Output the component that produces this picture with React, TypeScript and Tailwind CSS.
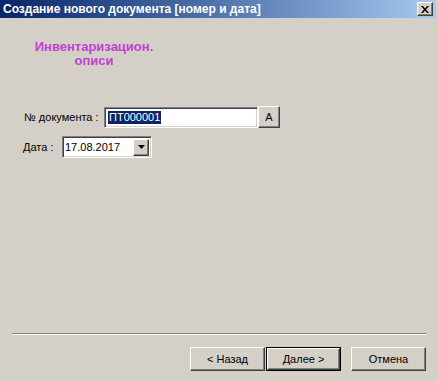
import React from "react";

const raised =
  "border border-t-white border-l-white border-r-[#404040] border-b-[#404040] shadow-[inset_-1px_-1px_0_#808080]";
const sunken =
  "border border-t-[#808080] border-l-[#808080] border-r-white border-b-white shadow-[inset_1px_1px_0_#404040,inset_-1px_-1px_0_#d4d0c8]";

function Btn({ label, def }: { label: string; def?: boolean }) {
  if (def) {
    return (
      <div className="w-[75px] h-[24px] border border-black">
        <div className={`w-full h-full bg-[#d4d0c8] flex items-center justify-center ${raised}`}>
          <span className="text-[11px] text-black">{label}</span>
        </div>
      </div>
    );
  }
  return (
    <div className={`w-[75px] h-[24px] bg-[#d4d0c8] flex items-center justify-center ${raised}`}>
      <span className="text-[11px] text-black">{label}</span>
    </div>
  );
}

export default function App() {
  return (
    <div
      className="w-[438px] h-[381px] bg-[#d4d0c8] flex flex-col overflow-hidden"
      style={{ fontFamily: '"Liberation Sans", Arial, sans-serif' }}
    >
      {/* title bar */}
      <div className="h-[18px] flex items-center bg-gradient-to-r from-[#0a246a] to-[#a6caf0] pl-[3px] pr-[3px] mr-[2px]">
        <span className="text-white font-bold text-[12px] leading-none whitespace-nowrap flex-1">
          Создание нового документа [номер и дата]
        </span>
        <div className={`w-[16px] h-[14px] bg-[#d4d0c8] flex items-center justify-center ${raised}`}>
          <svg width="8" height="7" viewBox="0 0 8 7">
            <path d="M0 0h2l2 2.5L6 0h2L5 3.5 8 7H6L4 4.5 2 7H0l3-3.5z" fill="black" />
          </svg>
        </div>
      </div>

      {/* heading */}
      <div className="w-[188px] pt-[22px] text-center text-[#c040d0] font-bold text-[13px] leading-[14px]">
        <div>Инвентаризацион.</div>
        <div>описи</div>
      </div>

      {/* doc number row */}
      <div className="flex items-center mt-[38px] h-[22px]">
        <span className="w-[104px] pl-[24px] text-[11px] text-black whitespace-nowrap">№ документа :</span>
        <div className={`w-[154px] h-[21px] bg-white flex items-center pl-[3px] ${sunken}`}>
          <span className="bg-[#0a246a] text-white text-[11px] leading-[13px] px-[1px]">ПТ000001</span>
        </div>
        <div className={`w-[22px] h-[22px] bg-[#d4d0c8] flex items-center justify-center ${raised}`}>
          <span className="text-[11px] text-black">A</span>
        </div>
      </div>

      {/* date row */}
      <div className="flex items-center mt-[8px] h-[22px]">
        <span className="w-[62px] pl-[23px] text-[11px] text-black whitespace-nowrap">Дата :</span>
        <div className={`w-[90px] h-[22px] bg-white flex items-center pl-[2px] pr-[2px] ${sunken}`}>
          <span className="flex-1 text-[11px] text-black">17.08.2017</span>
          <div className={`w-[16px] h-[17px] bg-[#d4d0c8] flex items-center justify-center ${raised}`}>
            <svg width="7" height="4" viewBox="0 0 7 4">
              <path d="M0 0h7L3.5 4z" fill="black" />
            </svg>
          </div>
        </div>
      </div>

      <div className="flex-1" />

      {/* separator */}
      <div className="mx-[12px] w-[414px] border-t border-t-[#808080] border-b border-b-white" />

      {/* buttons */}
      <div className="flex justify-end pr-[12px] mt-[12px] mb-[10px]">
        <Btn label="< Назад" />
        <div className="ml-[1px]">
          <Btn label="Далее >" def />
        </div>
        <div className="ml-[10px]">
          <Btn label="Отмена" />
        </div>
      </div>
    </div>
  );
}
